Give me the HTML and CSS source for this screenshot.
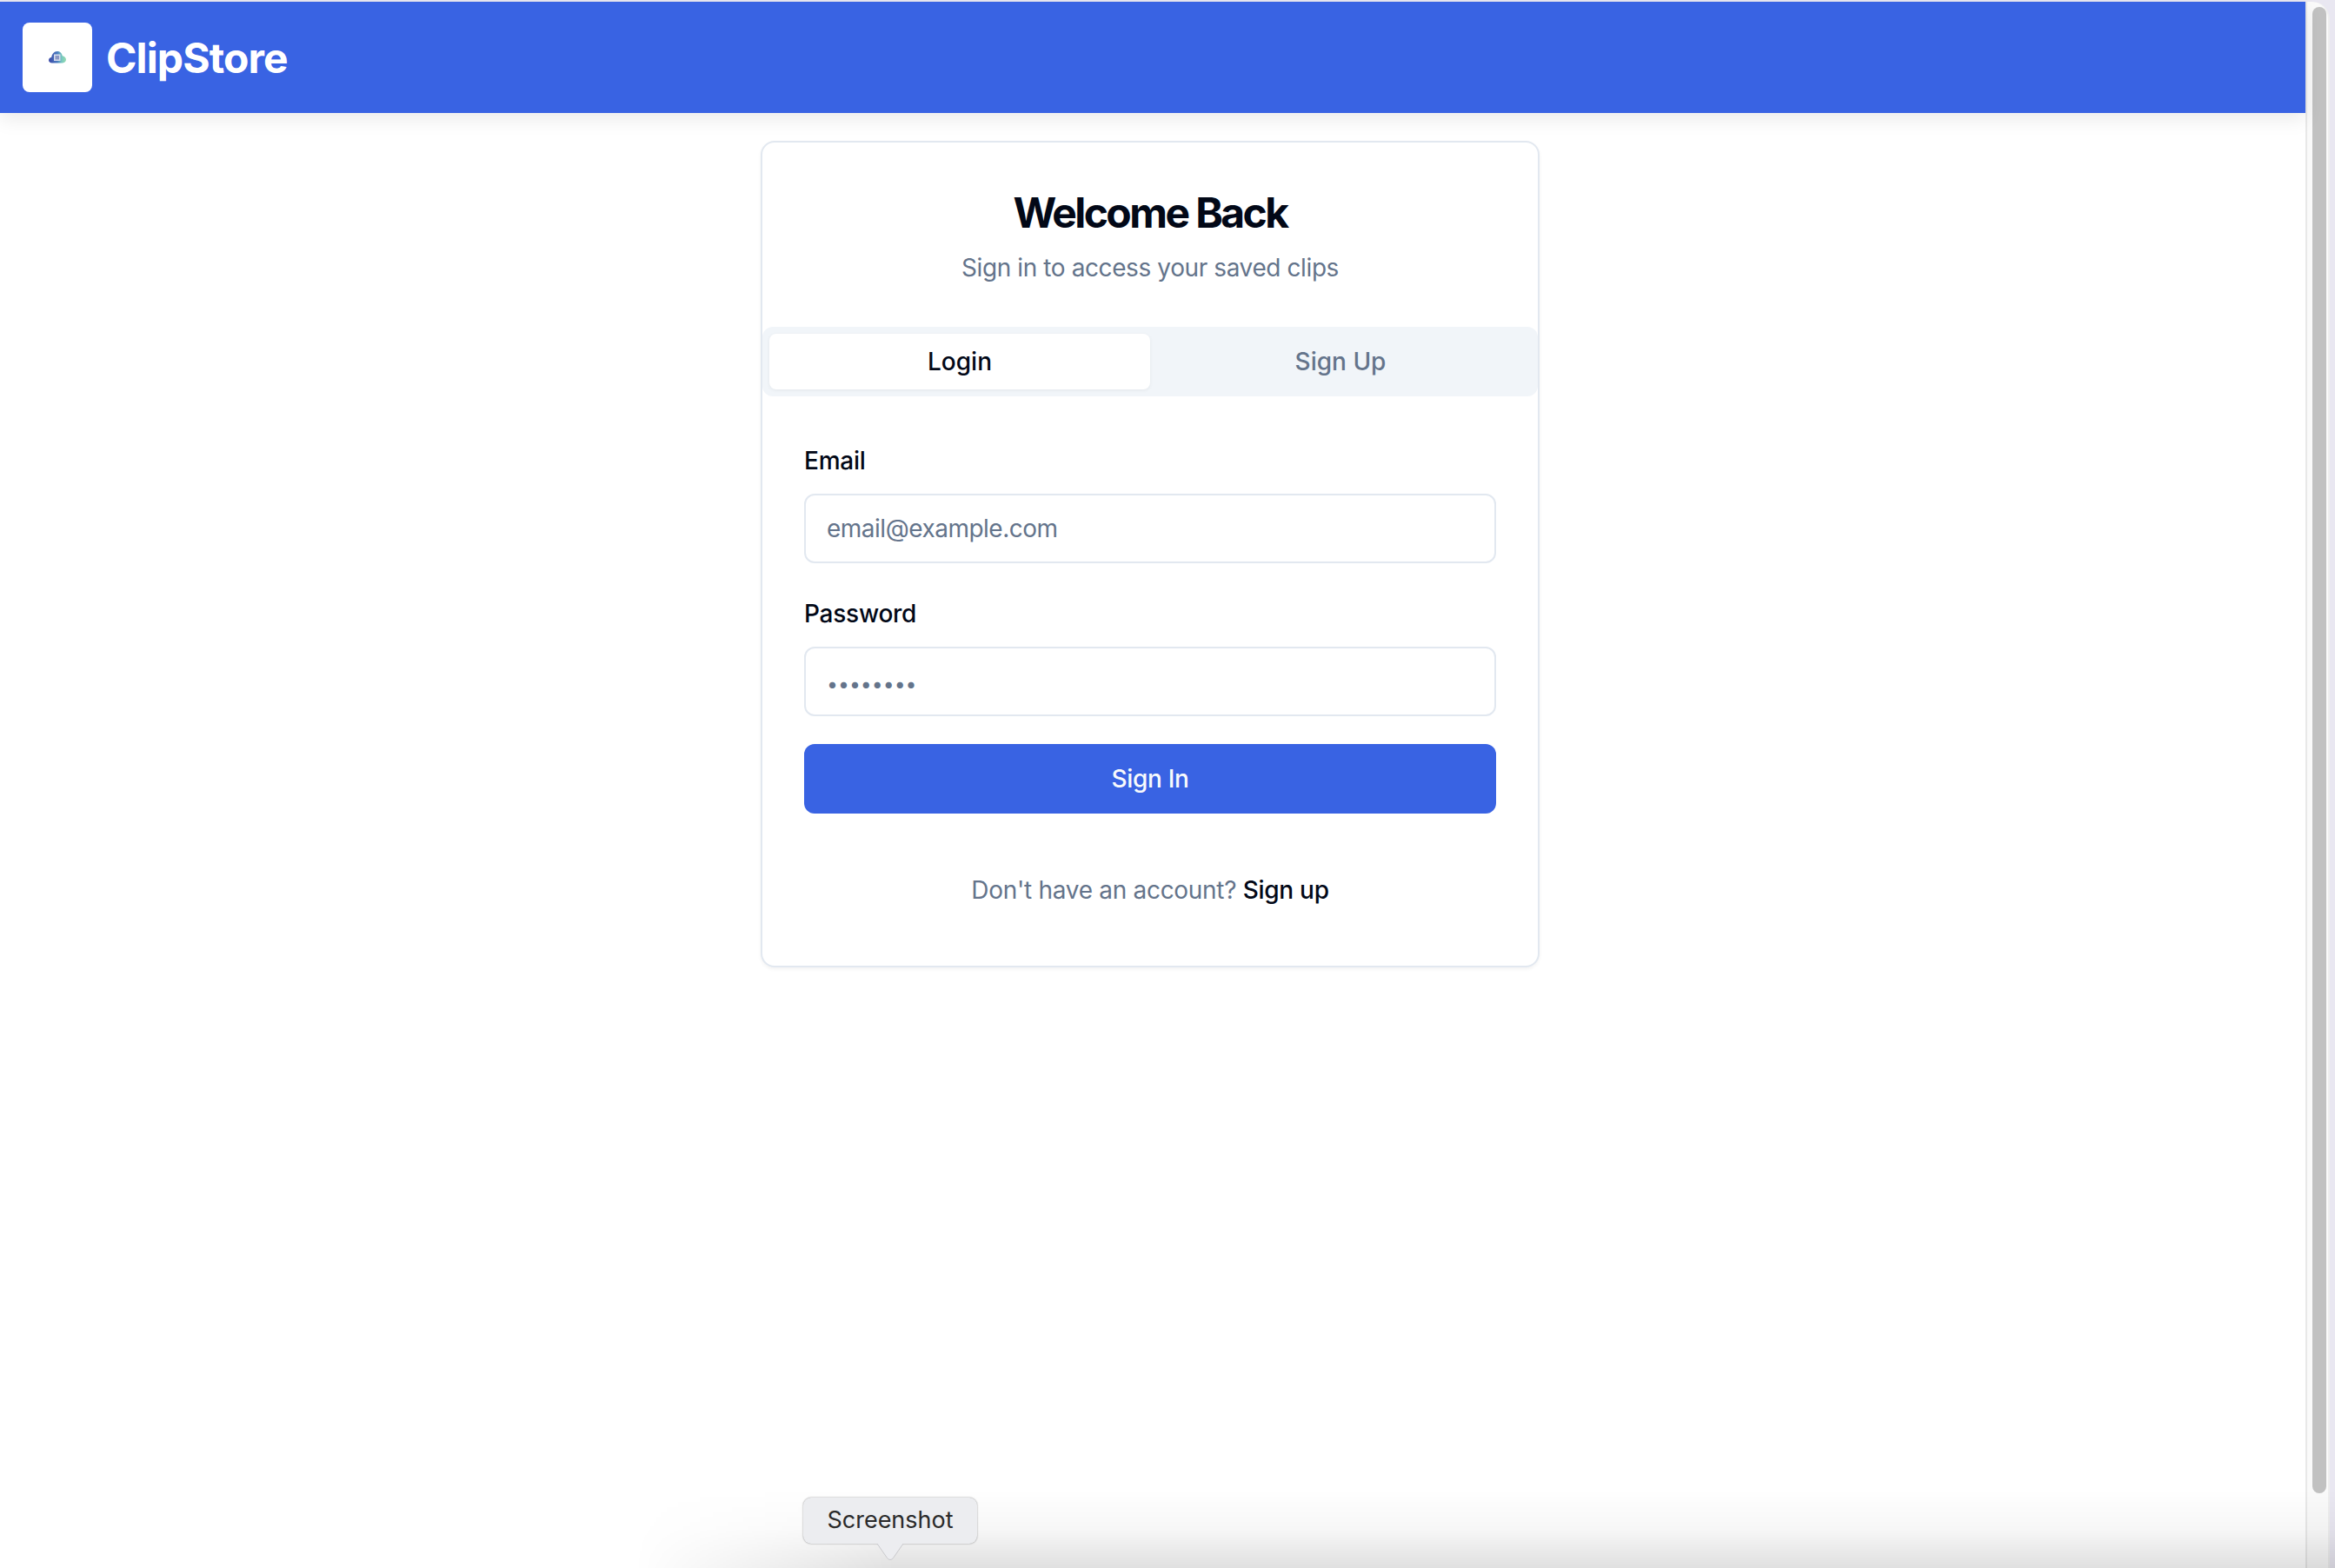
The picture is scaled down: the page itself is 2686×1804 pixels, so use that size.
FILE: index.html
```html
<!DOCTYPE html>
<html lang="en">
<head>
<meta charset="utf-8">
<title>ClipStore</title>
<link rel="stylesheet" href="styles.css">
</head>
<body>
<div class="window">
  <div class="page">
    <header class="topbar">
      <div class="logo">
        <svg class="logo-icon" width="20" height="15" viewBox="0 0 20 15">
          <defs>
            <linearGradient id="cloud" x1="0" y1="0" x2="1" y2="0">
              <stop offset="0" stop-color="#3c49a8"/>
              <stop offset="0.5" stop-color="#4a7cc0"/>
              <stop offset="0.75" stop-color="#78c8c0"/>
              <stop offset="1" stop-color="#95dcb0"/>
            </linearGradient>
          </defs>
          <path fill="url(#cloud)" d="M4 14.500C1.500 14.500 0 13 0 11.200 0 9.400 1.400 8 3.200 7.900 3.600 4.600 6.200 1 10 1c3 0 5.200 2 5.800 5.200C18 6.500 20 8.400 20 10.600 20 12.900 18.300 14.500 16 14.500Z"/>
          <rect x="6" y="4.500" width="7.500" height="7.500" fill="#d5dcec"/>
          <rect x="7.500" y="6" width="4.500" height="4.500" fill="#8b97c4"/>
        </svg>
      </div>
      <span class="brand">ClipStore</span>
    </header>
    <main class="main">
      <section class="card">
        <div class="intro">
          <h1 class="title">Welcome Back</h1>
          <p class="subtitle">Sign in to access your saved clips</p>
        </div>
        <div class="tabs">
          <button class="tab tab-active" type="button">Login</button>
          <button class="tab" type="button">Sign Up</button>
        </div>
        <form class="form">
          <div class="fields">
            <div class="field">
              <label class="label" for="email">Email</label>
              <input class="input" id="email" type="email" placeholder="email@example.com">
            </div>
            <div class="field">
              <label class="label" for="password">Password</label>
              <input class="input input-password" id="password" type="text" placeholder="••••••••">
            </div>
          </div>
          <button class="submit" type="button">Sign In</button>
        </form>
        <p class="switch">Don't have an account? <a class="switch-link" href="#">Sign up</a></p>
      </section>
    </main>
  </div>
  <div class="scrollbar"><div class="thumb"></div></div>
</div>
<div class="dock-shade"></div>
<div class="tooltip">
  Screenshot
  <svg class="tooltip-arrow" width="32" height="21" viewBox="0 0 32 21">
    <path d="M1 0 L12.500 16.500 Q16 20.500 19.500 16.500 L31 0 Z" fill="#ecedf0"/>
    <path d="M1 0 L12.500 16.500 Q16 20.500 19.500 16.500 L31 0" fill="none" stroke="#c9c9cc" stroke-width="1"/>
  </svg>
</div>
</body>
</html>
```
FILE: styles.css
```css
* { box-sizing: border-box; }
html, body { margin: 0; height: 100%; overflow: hidden; }
body {
  background: #e9e7f1;
  font-family: Inter, "Liberation Sans", sans-serif;
  color: #020817;
}
.window {
  display: flex;
  height: 1804px;
  padding: 2px 6px 0 0;
}
.page {
  width: 2652px;
  background: #fff;
  display: flex;
  flex-direction: column;
}
.topbar {
  height: 128px;
  background: #3963e3;
  display: flex;
  align-items: center;
  gap: 16px;
  padding-left: 26px;
  box-shadow: 0 8px 20px rgba(0, 0, 0, .08);
  position: relative;
}
.logo {
  width: 80px;
  height: 80px;
  background: #fff;
  border-radius: 8px;
  display: flex;
  align-items: center;
  justify-content: center;
}
.logo-icon { display: block; margin-top: -2px; }
.brand {
  font-size: 48px;
  font-weight: 700;
  color: #fff;
  letter-spacing: -.9px;
  line-height: 60px;
  margin-top: 2px;
}
.main {
  display: flex;
  justify-content: center;
  padding: 32px 6px 0 0;
}
.card {
  width: 896px;
  height: 951px;
  background: #fff;
  border: 2px solid #e2e8f0;
  border-radius: 16px;
  box-shadow: 0 2px 4px rgba(0, 0, 0, .05);
}
.intro {
  height: 212px;
  padding-top: 49px;
  text-align: center;
}
.title {
  margin: 0;
  font-size: 48px;
  line-height: 64px;
  font-weight: 700;
  letter-spacing: -2.6px;
}
.subtitle {
  margin: 11px 0 0;
  font-size: 28px;
  line-height: 40px;
  letter-spacing: -.4px;
  color: #64748b;
}
.tabs {
  height: 80px;
  background: #f1f5f9;
  border-radius: 12px;
  padding: 8px;
  display: grid;
  grid-template-columns: 1fr 1fr;
}
.tab {
  border: 0;
  background: transparent;
  border-radius: 8px;
  font: 500 28px/40px Inter, "Liberation Sans", sans-serif;
  color: #64748b;
  padding: 0;
}
.tab-active {
  background: #fff;
  color: #020817;
  box-shadow: 0 1px 4px rgba(0, 0, 0, .06);
}
.form {
  padding: 54px 48px 0;
  display: flex;
  flex-direction: column;
  gap: 32px;
}
.fields { display: flex; flex-direction: column; gap: 38px; }
.field { display: flex; flex-direction: column; gap: 18px; }
.label {
  font-size: 28px;
  line-height: 40px;
  font-weight: 500;
  letter-spacing: -.25px;
}
.input {
  height: 80px;
  width: 100%;
  border: 2px solid #e2e8f0;
  border-radius: 12px;
  background: #fff;
  padding: 0 24px;
  font: 400 28px/40px Inter, "Liberation Sans", sans-serif;
  letter-spacing: -.5px;
  color: #020817;
}
.input::placeholder { color: #64748b; opacity: 1; }
.input-password { padding-top: 2px; letter-spacing: 0; }
.input-password::placeholder { font-size: 23px; }
.submit {
  height: 80px;
  border: 0;
  border-radius: 12px;
  background: #3963e3;
  color: #f8fafc;
  font: 500 28px/40px Inter, "Liberation Sans", sans-serif;
  letter-spacing: -.3px;
}
.switch {
  margin: 68px 0 0;
  text-align: center;
  font-size: 28px;
  line-height: 40px;
  letter-spacing: -.3px;
  color: #64748b;
}
.switch-link {
  color: #020817;
  font-weight: 500;
  text-decoration: none;
}
.scrollbar {
  width: 28px;
  background: #fafafa;
  border-left: 2px solid #e8e8e8;
  border-right: 2px solid #eeeeee;
  padding: 6px 2px 0 6px;
  border-top-right-radius: 20px;
}
.thumb {
  height: 1710px;
  background: #c1c1c1;
  border-radius: 8px;
}
.dock-shade {
  position: absolute;
  left: 730px;
  right: 0;
  bottom: 0;
  height: 90px;
  background: linear-gradient(to bottom, rgba(0, 0, 0, 0), rgba(0, 0, 0, .03) 50%, rgba(0, 0, 0, .12));
  -webkit-mask-image: linear-gradient(to right, transparent, #000 300px);
  mask-image: linear-gradient(to right, transparent, #000 300px);
}
.tooltip {
  position: absolute;
  left: 924px;
  top: 1723px;
  width: 200px;
  height: 53px;
  background: #ecedf0;
  border-radius: 9px;
  box-shadow: 0 0 2px rgba(0, 0, 0, .45);
  font-size: 27px;
  line-height: 52px;
  text-align: center;
  color: #2a2a2a;
}
.tooltip-arrow {
  position: absolute;
  left: 84px;
  top: 53px;
  display: block;
}
```
